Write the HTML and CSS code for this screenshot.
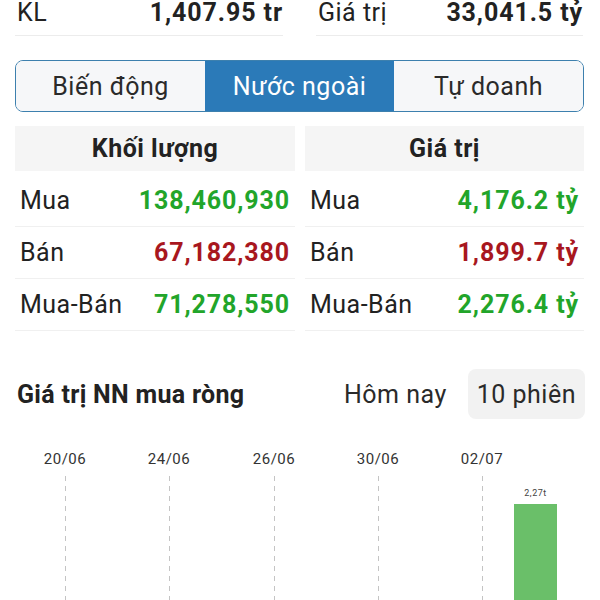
FILE: index.html
```html
<!DOCTYPE html>
<html lang="vi">
<head>
<meta charset="utf-8">
<link rel="stylesheet" href="styles.css">
</head>
<body>
<div class="summary">
  <div class="sum-cell"><span class="lbl">KL</span><span class="val">1,407.95 tr</span></div>
  <div class="sum-cell"><span class="lbl">Giá trị</span><span class="val">33,041.5 tỷ</span></div>
</div>

<div class="tabs">
  <div class="tab">Biến động</div>
  <div class="tab active">Nước ngoài</div>
  <div class="tab">Tự doanh</div>
</div>

<div class="tables">
  <div class="tbl">
    <div class="th">Khối lượng</div>
    <div class="tr"><span class="lbl">Mua</span><span class="num up">138,460,930</span></div>
    <div class="tr"><span class="lbl">Bán</span><span class="num down">67,182,380</span></div>
    <div class="tr"><span class="lbl">Mua-Bán</span><span class="num up">71,278,550</span></div>
  </div>
  <div class="tbl">
    <div class="th">Giá trị</div>
    <div class="tr"><span class="lbl">Mua</span><span class="num up">4,176.2 tỷ</span></div>
    <div class="tr"><span class="lbl">Bán</span><span class="num down">1,899.7 tỷ</span></div>
    <div class="tr"><span class="lbl">Mua-Bán</span><span class="num up">2,276.4 tỷ</span></div>
  </div>
</div>

<div class="chart-head">
  <div class="chart-title">Giá trị NN mua ròng</div>
  <div class="periods">
    <div class="period">Hôm nay</div>
    <div class="period selected">10 phiên</div>
  </div>
</div>

<svg class="chart" width="600" height="182" viewBox="0 0 600 182">
  <g class="dates" font-family="Roboto, sans-serif" font-size="15" fill="#333" text-anchor="middle">
    <text x="65" y="45">20/06</text>
    <text x="169" y="45">24/06</text>
    <text x="274" y="45">26/06</text>
    <text x="378" y="45">30/06</text>
    <text x="482" y="45">02/07</text>
  </g>
  <g stroke="#c4c4c4" stroke-width="1" stroke-dasharray="5 5">
    <line x1="65.5" y1="57" x2="65.5" y2="182"/>
    <line x1="169.5" y1="57" x2="169.5" y2="182"/>
    <line x1="274.5" y1="57" x2="274.5" y2="182"/>
    <line x1="378.5" y1="57" x2="378.5" y2="182"/>
    <line x1="482.5" y1="57" x2="482.5" y2="182"/>
  </g>
  <rect x="514" y="85" width="43" height="97" fill="#6abf69"/>
  <text x="535.5" y="77" font-family="Roboto, sans-serif" font-size="9" fill="#444" text-anchor="middle">2,27t</text>
</svg>
</body>
</html>
```
FILE: styles.css
```css
* { box-sizing: border-box; }
html, body {
  margin: 0;
  padding: 0;
  background: #fff;
}
body {
  width: 600px;
  height: 600px;
  overflow: hidden;
  font-family: Roboto, "Noto Sans", sans-serif;
  color: #222;
  font-size: 25px;
  letter-spacing: 0.5px;
}
.summary {
  display: grid;
  grid-template-columns: 268px 267px;
  column-gap: 33px;
  padding-left: 15px;
}
.sum-cell {
  display: flex;
  justify-content: space-between;
  align-items: center;
  height: 36px;
  padding: 1px 0 11px 2px;
  border-bottom: 1px solid #ececec;
  line-height: 24px;
}
.sum-cell .val {
  font-weight: 700;
  letter-spacing: 0.9px;
}
.tabs {
  display: flex;
  margin: 24px 16px 0 15px;
  height: 52px;
  border: 1.5px solid #3d80ae;
  border-radius: 8px;
  overflow: hidden;
}
.tab {
  flex: 1;
  display: flex;
  align-items: center;
  justify-content: center;
  background: #f6f7f9;
  color: #2a2a2a;
}
.tab.active {
  background: #2b7ab8;
  color: #fff;
}
.tables {
  display: grid;
  grid-template-columns: 280px 279px;
  column-gap: 10px;
  margin: 14px 0 0 15px;
}
.th {
  height: 45px;
  background: #f5f5f5;
  display: flex;
  align-items: center;
  justify-content: center;
  font-weight: 700;
  margin-bottom: 4px;
}
.tr {
  display: flex;
  justify-content: space-between;
  align-items: center;
  height: 52px;
  border-bottom: 1px solid #f0f0f0;
  padding: 0 5px 0 5px;
}
.num {
  font-weight: 700;
  letter-spacing: 0.9px;
}
.up { color: #22a52a; }
.down { color: #a8171e; }
.chart-head {
  display: flex;
  justify-content: space-between;
  align-items: center;
  margin: 38px 15px 0 17px;
}
.chart-title {
  font-weight: 700;
  letter-spacing: 0.3px;
}
.periods {
  display: flex;
  gap: 12px;
}
.period {
  height: 50px;
  display: flex;
  align-items: center;
  padding: 0 9px;
  border-radius: 8px;
  color: #2a2a2a;
}
.period.selected {
  background: #f2f2f2;
}
.chart {
  display: block;
}
```
